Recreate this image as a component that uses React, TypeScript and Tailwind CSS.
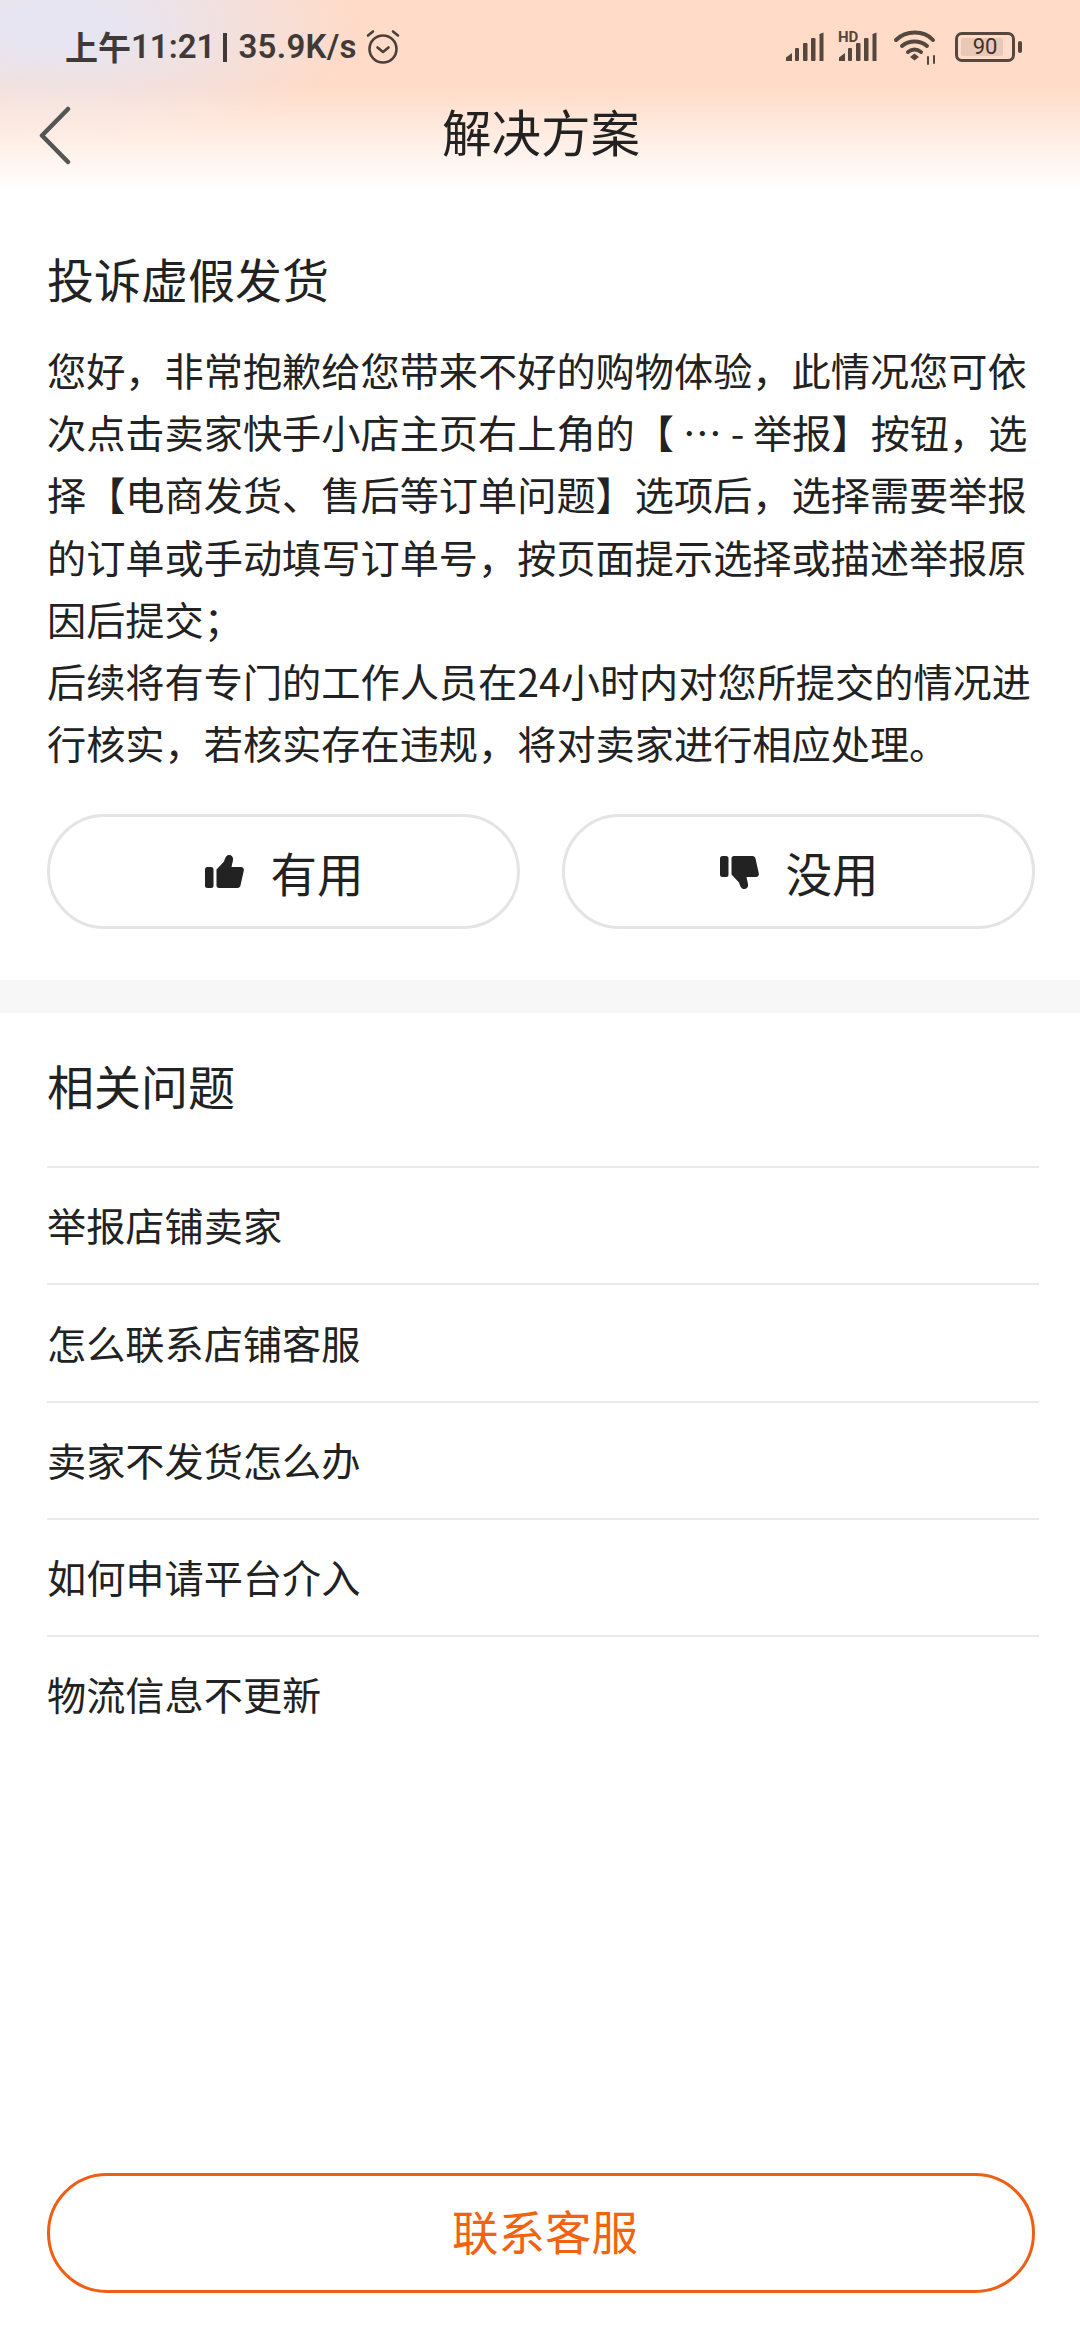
import React from 'react'

const related = ['举报店铺卖家', '怎么联系店铺客服', '卖家不发货怎么办', '如何申请平台介入', '物流信息不更新']

const Bars: React.FC<{ hd?: boolean }> = ({ hd }) => (
  <svg width="40" height="32" viewBox="0 0 40 32" className="text-[#55463e] overflow-visible" fill="currentColor">
    {hd && (
      <text x="0" y="11" fontSize="15" fontWeight="700" fontFamily="Roboto, sans-serif">
        HD
      </text>
    )}
    <path d="M1 30v-3.500l6-4.500v8z" />
    <rect x="10" y="17" width="4" height="13" rx="1" />
    <rect x="18" y="12" width="4.500" height="18" rx="1" />
    <rect x="26" y="7" width="4.500" height="23" rx="1" />
    <path d="M34.500 3l4-1.500V30h-4z" />
  </svg>
)

const Thumb: React.FC<{ down?: boolean }> = ({ down }) => (
  <svg width="40" height="36" viewBox="0 0 40 36" className={down ? 'rotate-180 -scale-x-100' : ''} fill="#222222">
    <rect x="1" y="13" width="8.500" height="21" rx="2.500" />
    <path d="M12.500 15.500 20 7.500c1-3 2-6 4.500-6.500 3-.5 5 2 4.500 5l-1.500 7h9.500c2 0 3.200 1.500 2.800 3.500l-3.300 15c-.4 1.500-1.500 2.500-3 2.500H15c-1.500 0-2.500-1-2.500-2.500z" />
  </svg>
)

const App: React.FC = () => {
  return (
    <div className="w-[1080px] h-[2340px] bg-white flex flex-col font-['Noto_Sans_CJK_SC','Noto_Sans',sans-serif] text-[#222222] overflow-hidden">
      <header className="h-[190px] shrink-0 flex flex-col bg-[linear-gradient(to_bottom,rgba(255,255,255,0)_0%,rgba(255,255,255,0)_45%,#ffffff_100%),radial-gradient(ellipse_300px_120px_at_60px_25px,#e7e5f1_20%,rgba(231,229,241,0)_100%),linear-gradient(#ffdbc8,#ffdbc8)]">
        <div className="h-[94px] pt-[24px] pl-[65px] pr-[58px] flex items-start justify-between">
          <div className="flex items-center h-[46px] text-[#3f3a38] font-semibold text-[33px]">
            <span>上午</span>
            <span className="font-['Roboto',sans-serif] font-semibold">11:21</span>
            <span className="ml-[8px] w-[4px] h-[29px] bg-[#3f3a38]" />
            <span className="ml-[11px] font-['Roboto',sans-serif] font-semibold tracking-[0.300px]">35.9K/s</span>
            <svg width="36" height="36" viewBox="0 0 36 36" fill="none" stroke="#4a403b" strokeWidth="2.600" strokeLinecap="round" strokeLinejoin="round" className="ml-[8px]">
              <circle cx="18" cy="20" r="13.500" />
              <path d="M12.500 18.500 18 23l5.500-4.500M3 6.500 8 2.500M33 6.500 28 2.500" />
            </svg>
          </div>
          <div className="flex items-center h-[46px] gap-[13px]">
            <Bars />
            <Bars hd />
            <svg width="46" height="36" viewBox="0 0 46 36" fill="none" stroke="#55463e" strokeWidth="4" strokeLinecap="round" className="ml-[2px]">
              <path d="M3 11C13 1 31 1 40 11M9 17c7-6 18-6 25 0M15 23c4-3 9-3 13 0" />
              <path d="M21.500 24.500l4.500 3.500-4.500 3.500-4.500-3.500z" fill="#55463e" stroke="none" />
              <path d="M35 28v7M41 27v7" strokeWidth="2" />
            </svg>
            <div className="flex items-center ml-[3px]">
              <div className="w-[60px] h-[30px] border-[3.5px] border-[#55463e] rounded-[7px] p-[3px] relative flex">
                <div className="w-[42px] h-full bg-[#e9c8b8] rounded-[2px]" />
                <span className="absolute inset-0 flex items-center justify-center text-[22px] leading-none text-[#3a322e] font-['Roboto',sans-serif]">90</span>
              </div>
              <div className="w-[4px] h-[12px] ml-[3px] bg-[#55463e] rounded-[2px]" />
            </div>
          </div>
        </div>
        <div className="relative flex-1 flex items-start justify-center">
          <svg width="34" height="60" viewBox="0 0 34 60" fill="none" stroke="#555555" strokeWidth="4.500" strokeLinecap="round" strokeLinejoin="round" className="absolute left-[38px] top-[12px]">
            <path d="M30 3 4 29.500 30 56" />
          </svg>
          <h1 className="text-[49.500px] leading-[54px] font-normal mt-[10px] ml-[2px]">解决方案</h1>
        </div>
      </header>

      <section className="px-[47px] h-[790px] shrink-0">
        <h2 className="text-[47px] leading-[60px] font-normal mt-[58px]">投诉虚假发货</h2>
        <p className="text-[39.200px] leading-[62.200px] mt-[30px] w-[994px]">
          您好，非常抱歉给您带来不好的购物体验，此情况您可依次点击卖家快手小店主页右上角的【 ⋯ - 举报】按钮，选择【电商发货、售后等订单问题】选项后，选择需要举报的订单或手动填写订单号，按页面提示选择或描述举报原因后提交；
          <br />
          后续将有专门的工作人员在24小时内对您所提交的情况进行核实，若核实存在违规，将对卖家进行相应处理。
        </p>
        <div className="flex gap-[42px] mt-[41px] w-[988px]">
          <button className="flex-1 h-[115px] rounded-full border-[3px] border-[#e4e4e4] flex items-center justify-center gap-[27px] text-[46.500px]">
            <Thumb />
            有用
          </button>
          <button className="flex-1 h-[115px] rounded-full border-[3px] border-[#e4e4e4] flex items-center justify-center gap-[27px] text-[46.500px]">
            <Thumb down />
            没用
          </button>
        </div>
      </section>

      <div className="h-[33px] shrink-0 bg-[#f7f7f7]" />

      <section className="pl-[47px] pr-[41px] flex-1">
        <h2 className="text-[47px] leading-[60px] font-normal mt-[42px] mb-[51px]">相关问题</h2>
        {related.map((item, index) => (
          <div key={index} className="h-[117.300px] pb-[2px] border-t-2 border-[#eaeaea] flex items-center text-[39.200px]">
            {item}
          </div>
        ))}
      </section>

      <div className="px-[47px] pb-[47px] shrink-0">
        <button className="w-[988px] h-[120px] pl-[8px] pb-[7px] rounded-full border-[3px] border-[#ee5f14] text-[#f0640f] text-[46.500px] flex items-center justify-center">
          联系客服
        </button>
      </div>
    </div>
  )
}

export default App
